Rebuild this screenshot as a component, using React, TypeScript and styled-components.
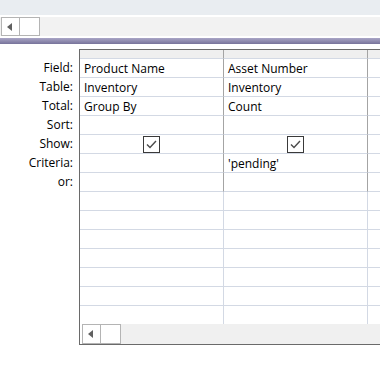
import React from "react";
import styled, { createGlobalStyle } from "styled-components";

const Global = createGlobalStyle`
  html, body { margin: 0; padding: 0; background: #ffffff; }
  body { font-family: "Open Sans", "Noto Sans", sans-serif; font-size: 12px; color: #000; }
`;

const Page = styled.div`
  width: 380px;
  height: 365px;
  overflow: hidden;
  display: flex;
  flex-direction: column;
  background: #fff;
`;

const TopBand = styled.div`
  height: 15px;
  background: #e9edf1;
`;

const HScroll = styled.div`
  height: 19px;
  margin-top: 2px;
  background: #f2f2f2;
  display: flex;
  padding-left: 1px;
`;

const ScrollBtn = styled.div`
  width: 17px;
  height: 17px;
  border: 1px solid #b4b4b4;
  background: #fff;
  display: flex;
  align-items: center;
  justify-content: center;
`;

const Arrow = styled.div`
  width: 0;
  height: 0;
  border-top: 4px solid transparent;
  border-bottom: 4px solid transparent;
  border-right: 5px solid #606060;
  margin-right: 2px;
`;

const Thumb = styled.div`
  width: 19px;
  height: 17px;
  border: 1px solid #b4b4b4;
  border-left: none;
  background: #fff;
`;

const Splitter = styled.div`
  height: 6px;
  margin-top: 2px;
  background: linear-gradient(#aaa6c6, #77739a);
`;

const QueryArea = styled.div`
  display: flex;
  margin-top: 5px;
`;

const Labels = styled.div`
  width: 79px;
  padding-top: 9px;
  display: flex;
  flex-direction: column;
`;

const Label = styled.div`
  height: 18px;
  padding-top: 1px;
  line-height: 18px;
  text-align: right;
  padding-right: 6px;
  color: #000;
`;

const Grid = styled.div`
  flex: 1;
  border-top: 1px solid #6a6a6a;
  border-left: 1px solid #6a6a6a;
  border-bottom: 1px solid #6a6a6a;
  display: flex;
  flex-direction: column;
`;

const Columns = styled.div`
  display: flex;
`;

const Column = styled.div<{ $w?: number }>`
  width: ${(p) => (p.$w ? `${p.$w}px` : "auto")};
  flex: ${(p) => (p.$w ? "none" : "1")};
  display: flex;
  flex-direction: column;
`;

const HeaderCell = styled.div<{ $div: boolean }>`
  height: 8px;
  background: #efefef;
  border-bottom: 1px solid #d3d9e4;
  border-right: ${(p) => (p.$div ? "1px solid #a4a4a4" : "none")};
`;

const Cell = styled.div<{ $div: boolean; $upper: boolean; $last: boolean }>`
  height: 17px;
  padding-top: 1px;
  line-height: 17px;
  padding-left: 4px;
  border-bottom: ${(p) => (p.$last ? "none" : "1px solid #d3d9e4")};
  border-right: ${(p) =>
    p.$div ? `1px solid ${p.$upper ? "#a4a4a4" : "#d3d9e4"}` : "none"};
  white-space: nowrap;
  overflow: hidden;
  color: #000;
  display: flex;
  align-items: center;
`;

const CheckCell = styled(Cell)`
  justify-content: center;
  padding-left: 0;
  padding-top: 0;
  height: 18px;
`;

const Box = styled.div`
  width: 15px;
  height: 15px;
  border: 1px solid #3a3a3a;
  background: #fff;
  display: flex;
  align-items: center;
  justify-content: center;
`;

const BottomScroll = styled.div`
  height: 20px;
  margin-left: 2px;
  background: #f0f0f0;
  display: flex;
`;

const BScrollBtn = styled(ScrollBtn)`
  height: 18px;
`;

const BThumb = styled(Thumb)`
  height: 18px;
`;

const labels = ["Field:", "Table:", "Total:", "Sort:", "Show:", "Criteria:", "or:"];

type ColData = { values: string[]; show: boolean };
const cols: ColData[] = [
  { values: ["Product Name", "Inventory", "Group By", "", "", "", ""], show: true },
  { values: ["Asset Number", "Inventory", "Count", "", "", "'pending'", ""], show: true },
  { values: ["", "", "", "", "", "", ""], show: false },
];

const ROWS = 14;

const Check = () => (
  <Box>
    <svg width="11" height="9" viewBox="0 0 11 9">
      <polyline points="1,4.5 4,7.5 10,1" fill="none" stroke="#4a4a4a" strokeWidth="1.4" />
    </svg>
  </Box>
);

export default function App() {
  return (
    <Page>
      <Global />
      <TopBand />
      <HScroll>
        <ScrollBtn>
          <Arrow />
        </ScrollBtn>
        <Thumb />
      </HScroll>
      <Splitter />
      <QueryArea>
        <Labels>
          {labels.map((l) => (
            <Label key={l}>{l}</Label>
          ))}
        </Labels>
        <Grid>
          <Columns>
            {cols.map((c, ci) => {
              const div = ci < 2;
              return (
                <Column key={ci} $w={div ? 144 : undefined}>
                  <HeaderCell $div={div} />
                  {Array.from({ length: ROWS }).map((_, ri) => {
                    const upper = ri < 7;
                    const last = ri === ROWS - 1;
                    if (ri === 4 && c.show) {
                      return (
                        <CheckCell key={ri} $div={div} $upper={upper} $last={last}>
                          <Check />
                        </CheckCell>
                      );
                    }
                    return (
                      <Cell key={ri} $div={div} $upper={upper} $last={last}>
                        {c.values[ri] ?? ""}
                      </Cell>
                    );
                  })}
                </Column>
              );
            })}
          </Columns>
          <BottomScroll>
            <BScrollBtn>
              <Arrow />
            </BScrollBtn>
            <BThumb />
          </BottomScroll>
        </Grid>
      </QueryArea>
    </Page>
  );
}
